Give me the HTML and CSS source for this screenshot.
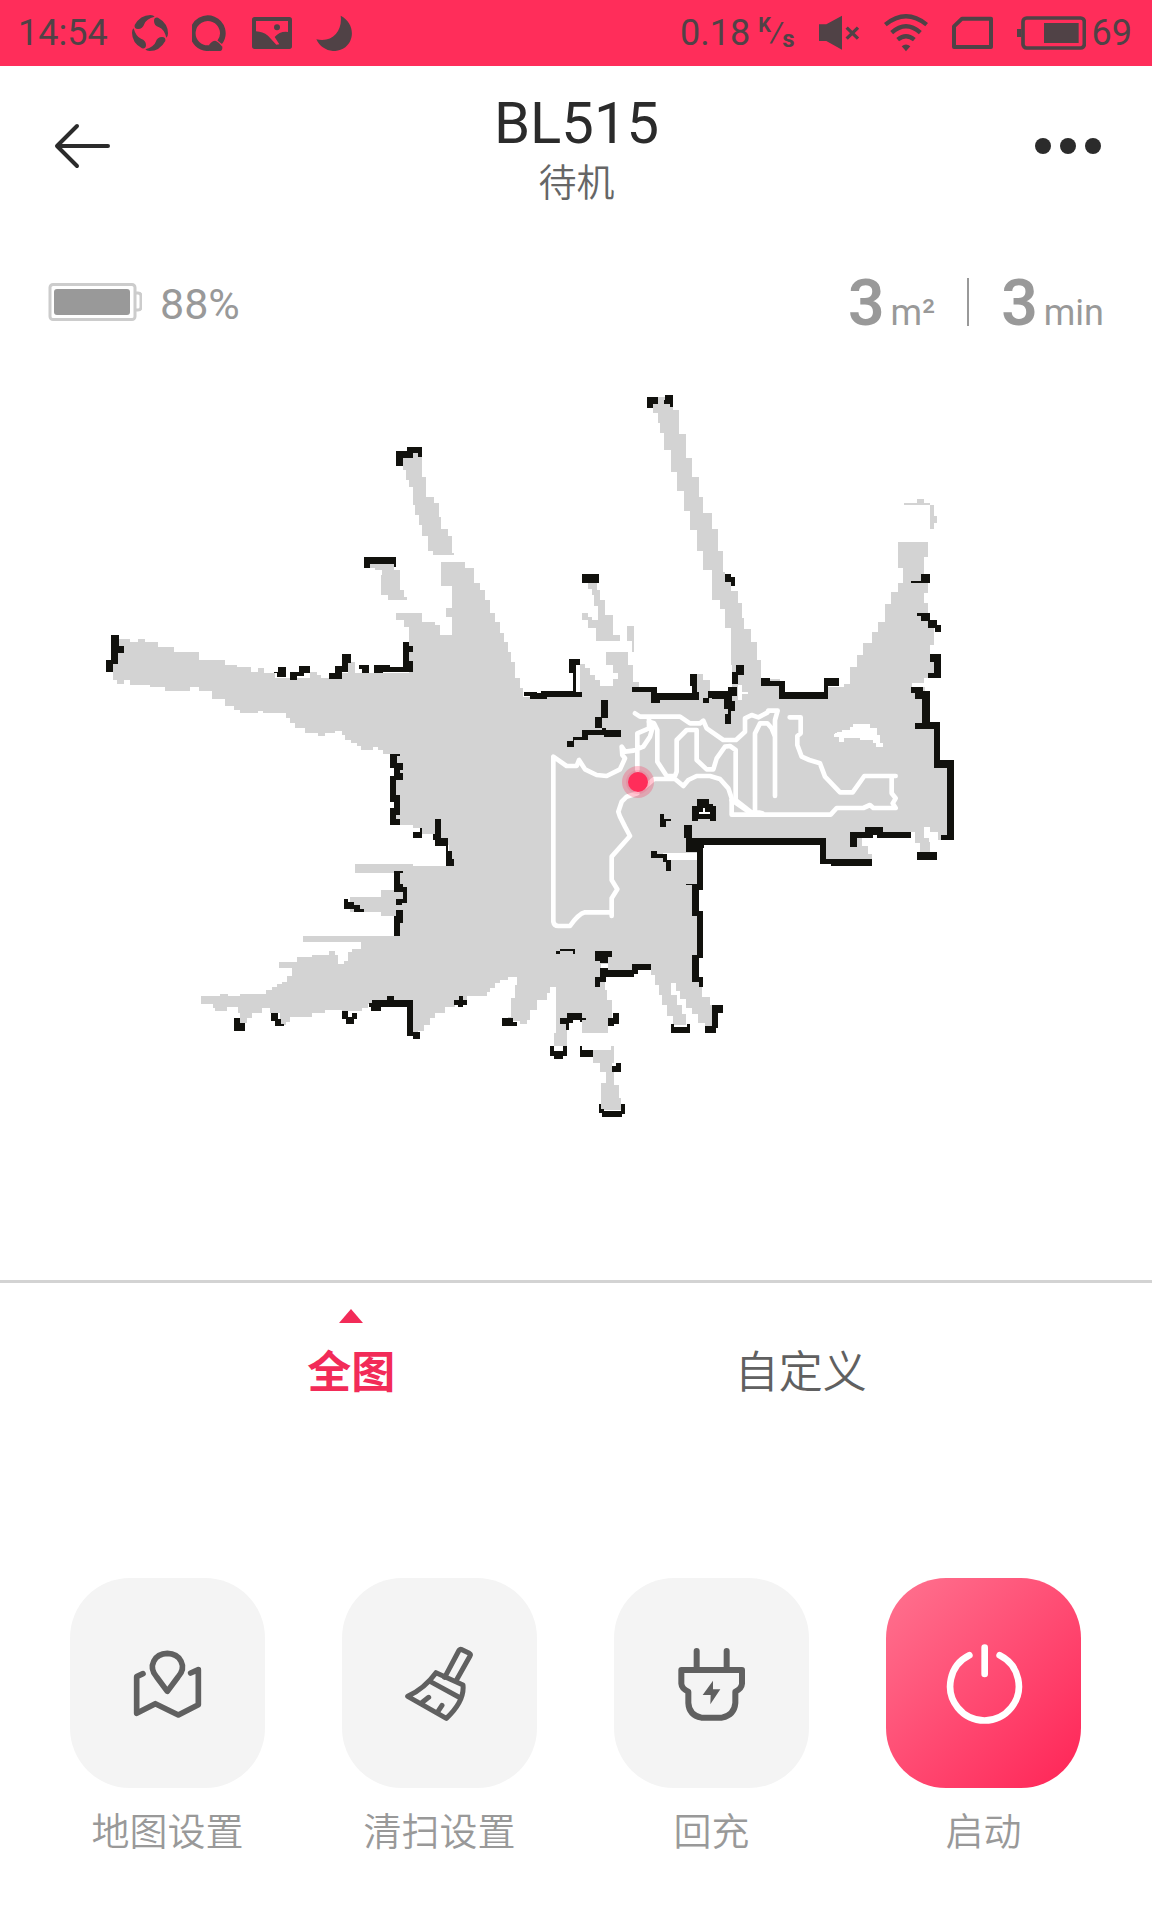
FILE: index.html
```html
<!DOCTYPE html>
<html lang="zh-CN">
<head>
<meta charset="utf-8">
<meta name="viewport" content="width=device-width, initial-scale=1">
<title>BL515</title>
<link rel="stylesheet" href="styles.css">
</head>
<body>
<div class="status-bar">
  <div class="status-group">
    <span>14:54</span>
    <svg width="36" height="36" viewBox="0 0 108 108" fill="currentColor" aria-hidden="true">
      <path d="M8 30Q25 0 55 0Q65 0 68 5Q42 12 37 27Q32 42 18 42Q6 42 8 30Z"/>
      <path d="M8 30Q25 0 55 0Q65 0 68 5Q42 12 37 27Q32 42 18 42Q6 42 8 30Z" transform="rotate(90 54 54)"/>
      <path d="M8 30Q25 0 55 0Q65 0 68 5Q42 12 37 27Q32 42 18 42Q6 42 8 30Z" transform="rotate(180 54 54)"/>
      <path d="M8 30Q25 0 55 0Q65 0 68 5Q42 12 37 27Q32 42 18 42Q6 42 8 30Z" transform="rotate(270 54 54)"/>
    </svg>
    <svg width="36" height="36" viewBox="0 0 108 108" aria-hidden="true">
      <path d="M83 82A45 45 0 1 0 54 99" fill="none" stroke="currentColor" stroke-width="17"/>
      <path d="M51 90Q63 75 72 78Q84 84 91 95Q92 107 84 108H54Z" fill="currentColor"/>
    </svg>
    <svg width="40" height="36" viewBox="0 0 120 108" aria-hidden="true">
      <path fill="currentColor" fill-rule="evenodd" d="M8 6H112Q120 6 120 14V94Q120 102 112 102H8Q0 102 0 94V14Q0 6 8 6ZM12 18V49Q32 50 48 62L73 89L82 88L68 66Q84 48 108 51V18ZM75 28A9 9 0 1 1 75 46A9 9 0 1 1 75 28Z"/>
    </svg>
    <svg width="36" height="36" viewBox="0 0 108 108" aria-hidden="true">
      <path fill="currentColor" d="M74 2C114 22 118 73 88 97C58 119 16 107 1 73C50 84 80 48 74 2Z"/>
    </svg>
  </div>
  <div class="status-group">
    <span class="speed">0.18<span class="unit"><b class="unit-top">K</b><i>/</i><b class="unit-bottom">s</b></span></span>
    <svg width="41" height="36" viewBox="0 0 123 108" aria-hidden="true">
      <path fill="currentColor" d="M0 28H22L69 2V104L22 78H0Z"/>
      <path d="M83 38L117 71M117 38L83 71" stroke="currentColor" stroke-width="10"/>
    </svg>
    <svg width="44" height="38" viewBox="0 0 132 114" fill="none" stroke="currentColor" stroke-width="13" aria-hidden="true">
      <path d="M4 32Q66-18 128 32M23 56Q66 18 109 56M41 77Q66 57 91 77"/>
      <path fill="currentColor" stroke="none" d="M66 112L53 97Q66 86 79 97Z"/>
    </svg>
    <svg width="41" height="34" viewBox="0 0 123 102" aria-hidden="true">
      <path d="M6 93V31L30 8H117V93Z" fill="none" stroke="currentColor" stroke-width="12" stroke-linejoin="round"/>
    </svg>
    <span class="phone-battery">
      <svg width="69" height="36" viewBox="0 0 207 108" aria-hidden="true">
        <rect x="18" y="9" width="184" height="90" rx="11" fill="none" stroke="currentColor" stroke-width="11"/>
        <path fill="currentColor" d="M0 42H13V66H0ZM81 24H185V84H81Z"/>
      </svg>
      <span>69</span>
    </span>
  </div>
</div>

<header class="header">
  <button class="icon-button" type="button" aria-label="返回">
    <svg width="58" height="46" viewBox="-2 0 58 46" fill="none" stroke="#2b2b2b" stroke-width="4" stroke-linecap="round" stroke-linejoin="round" aria-hidden="true">
      <path d="M23 3L3 23L23 43M4 23H54"/>
    </svg>
  </button>
  <div class="heading">
    <h1>BL515</h1>
    <p>待机</p>
  </div>
  <button class="icon-button" type="button" aria-label="更多">
    <svg width="66" height="46" viewBox="0 0 66 46" fill="#2b2b2b" aria-hidden="true">
      <circle cx="8" cy="23" r="8"/><circle cx="33" cy="23" r="8"/><circle cx="58" cy="23" r="8"/>
    </svg>
  </button>
</header>

<main>
  <section class="stats">
    <div class="charge">
      <svg width="94" height="38" viewBox="0 0 94 38" fill="none" stroke="#ccc" stroke-width="3" aria-hidden="true">
        <rect x="2" y="1.5" width="85" height="35" rx="3"/>
        <path d="M87 10H90Q93 10 93 13V24Q93 27 90 27H87"/>
        <rect x="6" y="6" width="76" height="26" rx="3" fill="#999" stroke="none"/>
      </svg>
      <span>88%</span>
    </div>
    <div class="totals">
      <p><strong>3</strong>m²</p>
      <span class="divider"></span>
      <p><strong>3</strong>min</p>
    </div>
  </section>

  <svg class="map" viewBox="0 350 1152 930" role="img" aria-label="清扫地图">
    <g fill="#d3d3d3" shape-rendering="crispEdges">
      <path d="M117 639H130V642H138V639H145V642H158V647H174V652H199V660H225V665H237V667H251V672H258V668H264V673H275V678H310V672H317V675H321V678H330L335 673H348V662H355V673H409V627H404V620H396V613H422V622H435V625H440V635H452V617H446V608H452V586H441V562H465V568H474V583H480V590H485V600H490V613H495V622H500V633H504V642H508V652H511V662H515V678H520V688H523V697H580V664H585V668H590V675H595V680H600V686H613V679H618V673H613V665H606V652H628V665H633V682H639V692H655V698H697V674H703V680H710V692H732V665H731V628H725V609H720V600H712V570H703V551H697V530H690V511H684V491H677V472H671V450H664V433H660V423H658V413H653V404H658V397H665V404H673V410H679V434H686V458H692V477H699V497H703V513H712V529H718V551H723V572H725V582H731V591H738V603H742V618H744V629H751V642H757V660H761V679H780V695H828V687H844V684H850V667H857V655H863V643H872V632H878V622H885V604H891V592H898V583H903V568H898V542H928V557H924V583H928V593H924V603H928V614H930V620H934V645H930V655H934V678H924V683H912V687H925V722H937V763H948V840H938V832H930V827H924V837H930V852H920V843H915V832H857V838H862V846H868V854H872V862H822V842H699V987H702V997H710V1005H713V1026H705V1023H698V1014H692V1008H686V999H680V991H676V983H671V995H677V1005H682V1014H686V1025H673V1016H667V1005H662V995H659V985H655V975H651V968H636V974H605V990H607V1000H612V1018H608V1033H582V1020H567V1046H554V1033H556V987H550V993H547V1000H537V1010H530V1020H527V1024H520V1021H508V1017H511V998H515V985H517V977H508V980H500V983H495V988H490V992H487V996H467V1003H455V1007H445V1013H435V1018H430V1025H424V1031H418V1036H410V1004H368V1008H362V1011H342V1010H325V1013H312V1017H290V1022H286V1025H280V1013H270V1008H262V1013H252V1018H247V1023H240V1013H238V1007H227V1011H215V1008H213V1004H201V996H220V994H228V996H240V994H266V990H272V987H277V984H282V982H287V976H292V968H279V962H297V957H312V955H329V951H335V955H338V964H344V961H348V952H352V949H361V942H303V936H397V916H381V912H350V897H381V890H397V873H355V864H413V866H449V845H438V834H422V828H413V825H395V754H383V750H378V747H373V750H361V746H357V743H351V740H345V735H342V731H335V733H325V736H318V733H305V728H295V723H290V718H286V713H263V711H258V713H240V710H234V706H225V699H212V691H199V687H190V691H165V687H150V685H130V680H124V684H117V680H113V664H117Z"/>
      <path d="M403 458H411V453H422V477H426V497H434V503H439V517H441V529H448V536H452V553H454V555H433V551H428V536H422V525H419V515H415V505H413V487H409V480H406V470H403Z"/>
      <path d="M370 564H394V570H400V590H404V597H407V600H388V595H381V575H382V570H375V568H370Z"/>
      <path d="M588 583H597V590H600V600H605V615H613V635H620V641H596V628H588V620H582V613H588V617H592V620H598V606H594V595H592V589H588ZM627 626H634V652H632V641H627Z"/>
      <path d="M904 503H917V499H924V503H930V505H904ZM930 505H934V516H937V523H934V529H930Z"/>
      <path d="M593 1050H611V1046H614V1063H612V1072H614V1085H619V1098H621V1110H601V1083H606V1072H600V1063H593Z"/>
    </g>
    <g fill="#fff" shape-rendering="crispEdges">
      <path d="M838 732H842V730H850V727H853V724H870V728H877V735H880V743H883V747H876V743H873V740H860V738H844V742H839V737H834V734Z"/>
      <path d="M663 853H697V860H666V856H663ZM601 964H608V968H601ZM738 685H742V692H748V694H742V700H738ZM924 827H930V832H933V838H937V850H932V842H929V838H924Z"/>
    </g>
    <g fill="#11110d" shape-rendering="crispEdges">
      <path d="M396 451H407V447H422V457H418V453H413V458H403V466H396ZM364 557H396V567H394V564H370V568H364ZM111 635H119V646H124V653H118V664H113V672H106V660H111Z"/>
      <path d="M278 667H286V677H277V673H274V672H278ZM290 672H299V666H310V673H304V676H297V680H290ZM329 673H335V666H342V654H351V663H348V672H342V679H329ZM356 669H359V665H369V673H362V669ZM374 665H390V667H403V642H409V646H413V652H409V661H413V672H383V673H374Z"/>
      <path d="M647 397H658V404H653V408H647ZM665 395H673V407H670V404H664V400H665ZM582 574H599V583H582ZM725 574H731V577H735V586H731V582H725Z"/>
      <path d="M524 692H537V693H541V691H573V673H569V659H580V665H576V692H582V697H547V699H530V696H524ZM632 687H657V693H692V686H690V674H697V692H699V700H660V703H651V692H632ZM703 703V698H708V691H728V687H737V696H732V701H735V711H731V724H725V714H728V709H724V699H712V698H709V703ZM736 665H744V675H738V684H732V672H736Z"/>
      <path d="M761 678H770V681H785V692H824V678H839V686H828V699H779V686H761ZM911 582V581H921V574H930V583H911ZM917 613H930V620H937V625H941V632H935V628H928V621H921V616H917ZM930 654H941V678H928V673H934V662H930ZM911 687H923V691H930V722H940V760H954V840H941V835H947V768H934V729H915V723H922V707H925V717H922V699H915V693H911Z"/>
      <path d="M865 827H883V832H911V838H877V835H873V838H857V847H850V832H865ZM917 852H937V860H917ZM684 825H692V838H826V859H872V866H831V864H820V845H704V848H703V890H699V911H703V958H699V977H703V987H699V982H692V955H697V916H692V885H686V884H697V852H686V838H684Z"/>
      <path d="M601 700H608V718H602V728H595V717H601ZM582 730H602V728H606V730H621V737H604V735H588V740H574V747H567V741H573V737H582ZM660 814H664V819H671V821H666V827H660ZM697 799H709V804H713V806H716V821H710V819H698V821H692V806H697ZM651 851H657V854H667V860H671V871H666V862H663V858H651Z"/>
      <path d="M390 754H400V756H397V763H403V770H400V773H403V780H396V795H400V815H396V819H400V825H390V808H394V802H390V776H394V768H390ZM413 832H420V828H422V838H413ZM435 819H441V838H448V851H452V859H454V866H446V846H435V840H433V834H435ZM394 871H403V873H400V884H403V887H407V903H402V905H396V899H403V892H394ZM396 910H403V923H400V936H394V916H396ZM344 899H348V902H354V905H360V909H364V912H354V909H344Z"/>
      <path d="M234 1018H240V1023H245V1031H234ZM271 1013H278V1019H281V1024H284V1026H275V1021H271ZM342 1011H348V1017H352V1013H357V1019H354V1024H346V1019H342ZM369 1003H372V1000H387V996H394V1000H413V1032H420V1039H413V1036H407V1007H381V1011H371V1007H369ZM454 1000H459V996H463V1000H467V1005H463V1007H458V1005H454ZM502 1018H513V1022H517V1026H502Z"/>
      <path d="M556 951H560V949H575V954H573V951H560V954H556ZM595 951H612V957H608V963H600V961H595ZM632 964H651V970H638V974H634V977H606V982H600V987H595V977H600V968H608V970H632ZM560 1018H567V1013H582V1018H586V1020H582V1022H580V1020H573V1023H569V1030H566V1024H560ZM608 1018H613V1013H619V1024H614V1026H608ZM550 1046H554V1051H563V1046H567V1056H563V1059H554V1056H550ZM580 1046H582V1050H593V1057H580ZM612 1066H616V1063H621V1072H612ZM599 1104H601V1109H604V1111H621V1104H625V1114H622V1117H602V1113H599ZM671 1024H674V1027H687V1024H690V1033H671ZM712 1005H723V1013H718V1028H716V1033H705V1026H712Z"/>
    </g>
    <path d="M703 808H705V812H710V814H699V812H703Z" fill="#fff"/>
    <g transform="translate(530 680) scale(.33333)" fill="none" stroke="#fff" stroke-width="14" stroke-linecap="round" stroke-linejoin="round">
      <path d="M779 112H812V160L802 168V195L815 230L838 240L870 250L885 290L930 337H968L1003 288H1097M1085 288V340L1097 355L1088 370L1097 384H1030L1020 375L1000 384H920L902 404H605V355L595 325L570 297L540 288H500L475 300L460 318L435 297H372L345 320"/>
      <path d="M315 100L330 110H450L480 130H510L520 122L530 145L580 180H618L645 155V115L665 105L685 112L712 98L715 92H743L735 120V348"/>
      <path d="M675 398V160L690 130H712L725 145L733 165M605 360L660 398H690L697 400"/>
      <path d="M357 125L372 130L382 150V245L410 288H435L440 275V180L470 150H500V240L530 268H550L560 235L585 200L600 198L617 210V360L665 398"/>
      <path d="M322 270V160L357 145V115M370 135L360 170L340 200L310 212L285 215L275 200L277 225L285 235L270 268L230 288L200 285L165 268L147 240L140 258H110L70 230V725Q72 738 85 738H120Q145 702 165 697H245V708V655L262 628L245 600V530L300 468L285 440L270 410L265 395L275 365L290 350L322 340"/>
    </g>
    <circle cx="638" cy="782" r="16" fill="#ff2d5a" fill-opacity=".28"/>
    <circle cx="638" cy="782" r="12" fill="#ff2d5a" fill-opacity=".14"/>
    <circle cx="638" cy="782" r="10" fill="#ff2d5a"/>
  </svg>

  <nav class="tabs" aria-label="清扫范围">
    <button class="tab tab-active" type="button">全图</button>
    <button class="tab" type="button">自定义</button>
  </nav>

  <div class="actions">
    <button class="action" type="button">
      <span class="tile">
        <svg width="75" height="75" viewBox="0 15 225 225" fill="none" stroke="#606060" stroke-width="17" stroke-linecap="round" stroke-linejoin="round" aria-hidden="true">
          <path d="M39 98L20 107V217L76 188L145 222L205 191V86L182 96"/>
          <path d="M112 151L80 108C52 75 74 38 112 37C150 38 173 75 144 108Z"/>
        </svg>
      </span>
      <span>地图设置</span>
    </button>
    <button class="action" type="button">
      <span class="tile">
        <svg width="75" height="75" viewBox="0 0 225 225" fill="none" stroke="#606060" stroke-width="15" stroke-linecap="round" stroke-linejoin="round" aria-hidden="true">
          <path d="M128 94L170 15Q172 8 180 11L202 22Q207 25 204 30L164 101"/>
          <path d="M102 80L183 117Q188 165 133 217L17 151Q68 127 102 80ZM84 106L170 153M80 154L61 169M120 178L108 196"/>
        </svg>
      </span>
      <span>清扫设置</span>
    </button>
    <button class="action" type="button">
      <span class="tile">
        <svg width="75" height="75" viewBox="0 0 225 225" fill="none" stroke="#606060" stroke-width="18" stroke-linecap="round" stroke-linejoin="round" aria-hidden="true">
          <path d="M68 15V68M158 15V68M22 72H204V113Q203 128 184 137V171Q181 207 144 215H82Q45 207 43 171V137Q23 128 22 113Z"/>
          <path d="M117 104L86 147H110L109 175L139 130H117Z" fill="#606060" stroke="none"/>
        </svg>
      </span>
      <span>回充</span>
    </button>
    <button class="action" type="button">
      <span class="tile tile-start">
        <svg width="80" height="84" viewBox="0 0 240 252" fill="none" stroke="#fff" stroke-width="20" stroke-linecap="round" aria-hidden="true">
          <path d="M122 20V99M76 43A103 103 0 1 0 167 43"/>
        </svg>
      </span>
      <span>启动</span>
    </button>
  </div>
</main>
</body>
</html>
```
FILE: styles.css
```css
* {
  box-sizing: border-box;
}

body {
  margin: 0;
  background: #fff;
  color: #999;
  font-family: Roboto, "Noto Sans CJK SC", sans-serif;
  font-size: 36px;
}

button {
  padding: 0;
  border: 0;
  background: none;
  color: inherit;
  font: inherit;
  cursor: pointer;
}

svg {
  display: block;
  flex: none;
}

h1,
p {
  margin: 0;
  font-weight: 400;
}

.status-bar {
  display: flex;
  justify-content: space-between;
  align-items: center;
  height: 66px;
  padding: 0 20px 0 18px;
  background: #ff2d5a;
  color: #504246;
}

.status-group,
.speed,
.unit,
.phone-battery {
  display: flex;
  align-items: center;
}

.status-group {
  gap: 24px;
}

.speed {
  gap: 8px;
}

.phone-battery {
  gap: 6px;
}

.unit {
  font-size: 24px;
  line-height: 24px;
}

.unit i {
  font-size: 28px;
}

.unit-top {
  font-size: 20px;
  padding-bottom: 16px;
}

.unit-bottom {
  padding-top: 12px;
}

.header {
  display: flex;
  justify-content: space-between;
  align-items: center;
  height: 160px;
  padding: 0 51px 0 52px;
}

.icon-button {
  display: flex;
  width: 66px;
}

.heading {
  padding-top: 10px;
  text-align: center;
}

h1 {
  color: #2b2b2b;
  font-size: 58px;
  line-height: 64px;
}

.heading p {
  color: #666;
  font-size: 38px;
  font-weight: 350;
  line-height: 56px;
}

.stats {
  display: flex;
  justify-content: space-between;
  height: 124px;
  padding: 32px 48px 0;
}

.charge {
  display: flex;
  align-items: center;
  gap: 18px;
  height: 88px;
  font-size: 43px;
}

.charge span {
  padding-top: 4px;
}

.totals {
  display: flex;
  align-items: center;
  gap: 32px;
  height: 88px;
}

.totals p {
  padding-top: 12px;
  line-height: 60px;
}

.totals strong {
  margin-right: 6px;
  font-size: 64px;
  font-weight: 600;
}

.divider {
  width: 2px;
  height: 48px;
  background: #999;
}

.map {
  width: 100%;
  height: auto;
}

.tabs {
  display: grid;
  grid-template-columns: 1fr 1fr;
  padding: 26px 11%;
  border-top: 3px solid #d3d3d3;
}

.tab {
  display: flex;
  flex-direction: column;
  align-items: center;
  gap: 18px;
  color: #606060;
  font-size: 44px;
  font-weight: 350;
  line-height: 64px;
}

.tab::before {
  content: "";
  border: 12px solid transparent;
  border-top: 0;
  border-bottom: 14px solid transparent;
}

.tab-active {
  color: #f22b58;
  font-weight: 700;
}

.tab-active::before {
  border-bottom-color: #f22b58;
}

.actions {
  display: grid;
  grid-template-columns: repeat(4, 1fr);
  gap: 77px;
  padding: 147px 71px 60px 70px;
}

.action {
  display: flex;
  flex-direction: column;
  align-items: center;
  gap: 16px;
  font-size: 38px;
  font-weight: 350;
  line-height: 56px;
  white-space: nowrap;
}

.tile {
  display: flex;
  justify-content: center;
  align-items: center;
  width: 100%;
  height: 210px;
  border-radius: 60px;
  background: #f4f4f4;
}

.tile-start {
  background: linear-gradient(135deg, #ff7390, #ff2456);
}
```
